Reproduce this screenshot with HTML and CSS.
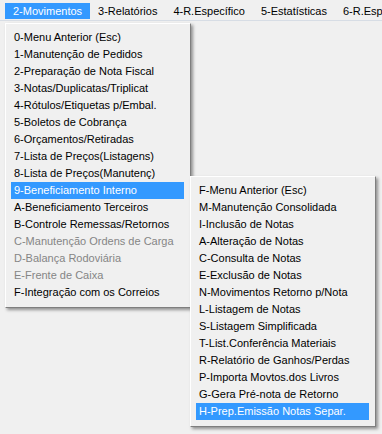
FILE: index.html
```html
<!DOCTYPE html>
<html lang="pt-BR">
<head>
    <meta charset="UTF-8">
    <meta name="viewport" content="width=device-width, initial-scale=1.0">
    <title>Movimentos</title>
    <link rel="stylesheet" href="styles.css">
</head>
<body>

    <!-- Menu bar -->
    <div class="menubar">
        <div class="menubar-item active">2-Movimentos</div>
        <div class="menubar-item">3-Relatórios</div>
        <div class="menubar-item">4-R.Específico</div>
        <div class="menubar-item">5-Estatísticas</div>
        <div class="menubar-item">6-R.Específico</div>
    </div>

    <!-- Dropdown of 2-Movimentos -->
    <div class="menu dropdown">
        <div class="item">0-Menu Anterior (Esc)</div>
        <div class="item">1-Manutenção de Pedidos</div>
        <div class="item">2-Preparação de Nota Fiscal</div>
        <div class="item">3-Notas/Duplicatas/Triplicat</div>
        <div class="item">4-Rótulos/Etiquetas p/Embal.</div>
        <div class="item">5-Boletos de Cobrança</div>
        <div class="item">6-Orçamentos/Retiradas</div>
        <div class="item">7-Lista de Preços(Listagens)</div>
        <div class="item">8-Lista de Preços(Manutenç)</div>
        <div class="item active">9-Beneficiamento Interno</div>
        <div class="item">A-Beneficiamento Terceiros</div>
        <div class="item">B-Controle Remessas/Retornos</div>
        <div class="item disabled">C-Manutenção Ordens de Carga</div>
        <div class="item disabled">D-Balança Rodoviária</div>
        <div class="item disabled">E-Frente de Caixa</div>
        <div class="item">F-Integração com os Correios</div>
    </div>

    <!-- Submenu of 9-Beneficiamento Interno -->
    <div class="menu submenu">
        <div class="item">F-Menu Anterior (Esc)</div>
        <div class="item">M-Manutenção Consolidada</div>
        <div class="item">I-Inclusão de Notas</div>
        <div class="item">A-Alteração de Notas</div>
        <div class="item">C-Consulta de Notas</div>
        <div class="item">E-Exclusão de Notas</div>
        <div class="item">N-Movimentos Retorno p/Nota</div>
        <div class="item">L-Listagem de Notas</div>
        <div class="item">S-Listagem Simplificada</div>
        <div class="item">T-List.Conferência Materiais</div>
        <div class="item">R-Relatório de Ganhos/Perdas</div>
        <div class="item">P-Importa Movtos.dos Livros</div>
        <div class="item">G-Gera Pré-nota de Retorno</div>
        <div class="item active">H-Prep.Emissão Notas Separ.</div>
    </div>

</body>
</html>
```

FILE: styles.css
```css
html {
    overflow: hidden;
}

body {
    margin: 0;
    min-height: 434px;
    position: relative;
    font-family: "Liberation Sans", Arial, sans-serif;
    font-size: 11px;
    color: #000000;
    background-color: #f0f0f0;
}

/* Menu bar */
.menubar {
    display: flex;
    padding: 3px 0 1px 5px;
    border-top: 1px solid #e3e8ee;
    margin-top: -1px;
    border-bottom: 1px solid #d7dde5;
    white-space: nowrap;
    overflow: hidden;
}

.menubar-item {
    padding: 0 8px;
    line-height: 16px;
}

.menubar-item.active {
    background-color: #3399ff;
    color: white;
}

/* Popup menus */
.menu {
    position: absolute;
    width: 173px;
    padding: 5px 6px 6px 5px;
    background-color: #f0f0f0;
    border: 1px solid;
    border-color: #ffffff #7f7f7f #7f7f7f #ffffff;
    box-shadow: 2px 2px 3px rgba(0, 0, 0, 0.4);
    white-space: nowrap;
}

.dropdown {
    left: 5px;
    top: 23px;
}

.submenu {
    left: 190px;
    top: 176px;
}

.item {
    padding-left: 3px;
    line-height: 17px;
    height: 17px;
}

.item.active {
    background-color: #3399ff;
    color: white;
}

.item.disabled {
    color: #858585;
}
```
